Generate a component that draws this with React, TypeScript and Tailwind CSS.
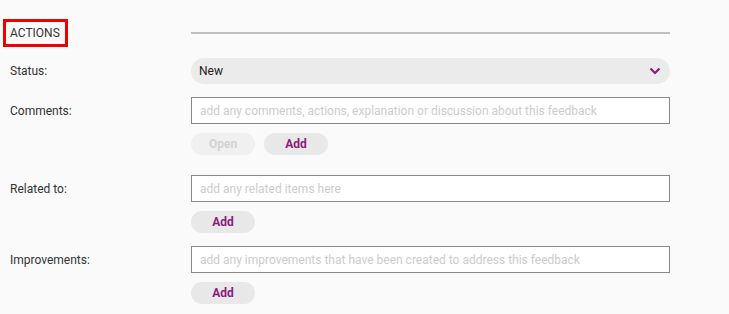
import { useState } from "react"

const font = { fontFamily: "Roboto, 'Liberation Sans', sans-serif" }

function Pill({ label, disabled }: { label: string; disabled?: boolean }) {
	return (
		<button
			type="button"
			disabled={disabled}
			className={
				disabled
					? "h-[22px] w-[64px] rounded-full bg-[#f0f0f0] text-[12px] font-bold text-[#d3d3d3]"
					: "h-[22px] w-[64px] rounded-full bg-[#e8e8e8] text-[12px] font-bold text-[#8b1d7d]"
			}
		>
			{label}
		</button>
	)
}

function TextRow({ placeholder }: { placeholder: string }) {
	return (
		<input
			type="text"
			placeholder={placeholder}
			className="h-[27px] w-[479px] border-[1.5px] border-[#888888] bg-white px-[8px] text-[12px] text-[#333] outline-none placeholder:text-[#cccccc]"
		/>
	)
}

export default function App() {
	const [status] = useState("New")

	return (
		<div className="h-[314px] w-[729px] bg-[#fafafa] text-[12px] text-[#333333]" style={font}>
			<div className="grid grid-cols-[191px_479px] pt-[19px]">
				{/* header */}
				<div className="flex h-[28px] items-center">
					<div className="ml-[3px] flex h-[28px] w-[65px] items-center border-[3px] border-[#f00000] pl-[4px] text-[12px] uppercase text-[#333]">
						Actions
					</div>
				</div>
				<div className="flex h-[28px] items-center">
					<div className="h-[2px] w-[479px] bg-[#c0c0c0]" />
				</div>

				{/* status */}
				<div className="mt-[11px] flex h-[26px] items-center pl-[10px]">Status:</div>
				<div className="mt-[11px] flex h-[26px] items-center justify-between rounded-full bg-[#ebebeb] pl-[8px] pr-[8px] text-[#222]">
					<span>{status}</span>
					<svg width="12" height="8" viewBox="0 0 12 8" className="mr-[1px]">
						<path d="M1.5 1.5 L6 6 L10.5 1.5" fill="none" stroke="#8b1d7d" strokeWidth="2.2" />
					</svg>
				</div>

				{/* comments */}
				<div className="mt-[13px] flex h-[27px] items-center pl-[10px]">Comments:</div>
				<div className="mt-[13px]">
					<TextRow placeholder="add any comments, actions, explanation or discussion about this feedback" />
					<div className="mt-[9px] flex gap-[9px]">
						<Pill label="Open" disabled />
						<Pill label="Add" />
					</div>
				</div>

				{/* related */}
				<div className="mt-[20px] flex h-[27px] items-center pl-[10px]">Related to:</div>
				<div className="mt-[20px]">
					<TextRow placeholder="add any related items here" />
					<div className="mt-[9px] flex">
						<Pill label="Add" />
					</div>
				</div>

				{/* improvements */}
				<div className="mt-[13px] flex h-[27px] items-center pl-[10px]">Improvements:</div>
				<div className="mt-[13px]">
					<TextRow placeholder="add any improvements that have been created to address this feedback" />
					<div className="mt-[9px] flex">
						<Pill label="Add" />
					</div>
				</div>
			</div>
		</div>
	)
}
